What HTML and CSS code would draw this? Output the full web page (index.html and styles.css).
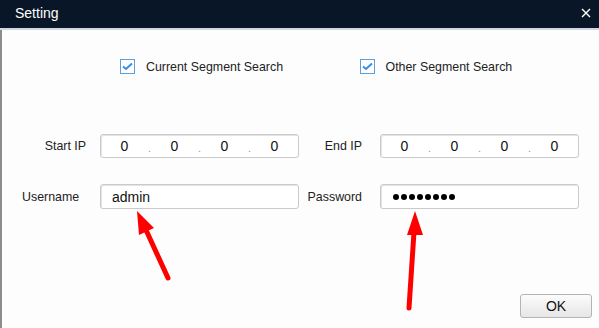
FILE: index.html
```html
<!DOCTYPE html>
<html lang="en">
<head>
    <meta charset="UTF-8">
    <title>Setting</title>
    <link rel="stylesheet" href="styles.css">
</head>
<body>
    <div class="dialog">
        <div class="titlebar">
            <span class="title">Setting</span>
            <svg class="close" width="10" height="10" viewBox="0 0 10 10">
                <path d="M1 1 L9 9 M9 1 L1 9" stroke="#fff" stroke-width="1.4" fill="none"/>
            </svg>
        </div>
        <div class="content">
            <div class="checks">
                <label class="check">
                    <span class="box">
                        <svg width="11" height="9" viewBox="0 0 11 9"><path d="M1 4.5 L4 7 L10 1.5" stroke="#3a8ee0" stroke-width="2" fill="none"/></svg>
                    </span>
                    Current Segment Search
                </label>
                <label class="check">
                    <span class="box">
                        <svg width="11" height="9" viewBox="0 0 11 9"><path d="M1 4.5 L4 7 L10 1.5" stroke="#3a8ee0" stroke-width="2" fill="none"/></svg>
                    </span>
                    Other Segment Search
                </label>
            </div>

            <div class="form">
                <div class="label label-ip">Start IP</div>
                <div class="field ip">
                    <span>0</span><span class="dot">.</span><span>0</span><span class="dot">.</span><span>0</span><span class="dot">.</span><span>0</span>
                </div>
                <div class="label label-right">End IP</div>
                <div class="field ip">
                    <span>0</span><span class="dot">.</span><span>0</span><span class="dot">.</span><span>0</span><span class="dot">.</span><span>0</span>
                </div>

                <div class="label label-user">Username</div>
                <div class="field text">admin</div>
                <div class="label label-right">Password</div>
                <div class="field text pass">
                    <i></i><i></i><i></i><i></i><i></i><i></i><i></i><i></i>
                </div>
            </div>

            <div class="footer">
                <button class="ok">OK</button>
            </div>
        </div>

        <!-- annotation arrows -->
        <svg class="arrows" width="599" height="328" viewBox="0 0 599 328">
            <line x1="168" y1="278" x2="146" y2="230" stroke="#ff0000" stroke-width="5" stroke-linecap="round"/>
            <polygon points="137,211 139,235 154,228" fill="#ff0000"/>
            <line x1="409" y1="308" x2="414" y2="232" stroke="#ff0000" stroke-width="5" stroke-linecap="round"/>
            <polygon points="415,211 407,235 423,235" fill="#ff0000"/>
        </svg>
    </div>
</body>
</html>
```

FILE: styles.css
```css
body {
    margin: 0;
    padding: 0;
    font-family: "Liberation Sans", Arial, sans-serif;
    background: #fdfdfd;
}
.dialog {
    position: relative;
    width: 599px;
    height: 328px;
    display: flex;
    flex-direction: column;
    overflow: hidden;
}
.titlebar {
    height: 30px;
    box-sizing: border-box;
    background-color: #081628;
    border-bottom: 2px solid #cfd7e3;
    display: flex;
    align-items: center;
    justify-content: space-between;
    padding: 0 8px 0 15px;
}
.title {
    color: #fff;
    font-size: 14px;
    margin-top: -2px;
}
.close {
    margin-top: -3px;
}
.content {
    flex: 1;
    display: flex;
    flex-direction: column;
    border-left: 2px solid #8c8c8c;
}
.checks {
    display: flex;
    padding-left: 118px;
    margin-top: 29px;
}
.check {
    width: 240px;
    display: flex;
    align-items: center;
    font-size: 12.4px;
    color: #222;
}
.box {
    width: 13px;
    height: 13px;
    border: 1px solid #5b9ee2;
    background: #fff;
    display: flex;
    align-items: center;
    justify-content: center;
    margin-right: 11px;
}
.form {
    display: grid;
    grid-template-columns: 98px 199px 81px 199px;
    grid-template-rows: 24px 25px;
    row-gap: 26px;
    margin-top: 60px;
}
.label {
    font-size: 12.4px;
    color: #222;
    display: flex;
    align-items: center;
}
.label-ip {
    justify-content: flex-end;
    padding-right: 14px;
}
.label-user {
    padding-left: 20px;
}
.label-right {
    justify-content: flex-end;
    padding-right: 18px;
}
.field {
    border: 1px solid #cacaca;
    border-radius: 3px;
    background: #fff;
    box-shadow: inset 1px 1px 0 #e4e4e4;
    display: flex;
    align-items: center;
    font-size: 14px;
    color: #111;
}
.ip {
    padding-left: 11px;
}
.ip span {
    width: 25px;
    text-align: center;
}
.ip .dot {
    color: #999;
    font-size: 11px;
    padding-top: 4px;
}
.text {
    padding-left: 11px;
}
.pass {
    gap: 2px;
    padding-left: 12px;
}
.pass i {
    width: 6px;
    height: 6px;
    border-radius: 50%;
    background: #000;
}
.footer {
    margin-top: auto;
    display: flex;
    justify-content: flex-end;
    padding: 0 7px 10px 0;
}
.ok {
    width: 72px;
    height: 24px;
    font-family: "Liberation Sans", Arial, sans-serif;
    font-size: 14px;
    color: #111;
    border: 1px solid #b4b4b4;
    border-radius: 3px;
    background: linear-gradient(#fcfcfc, #e6e6e6);
    padding: 0;
}
.arrows {
    position: absolute;
    left: 0;
    top: 0;
    pointer-events: none;
}
```
